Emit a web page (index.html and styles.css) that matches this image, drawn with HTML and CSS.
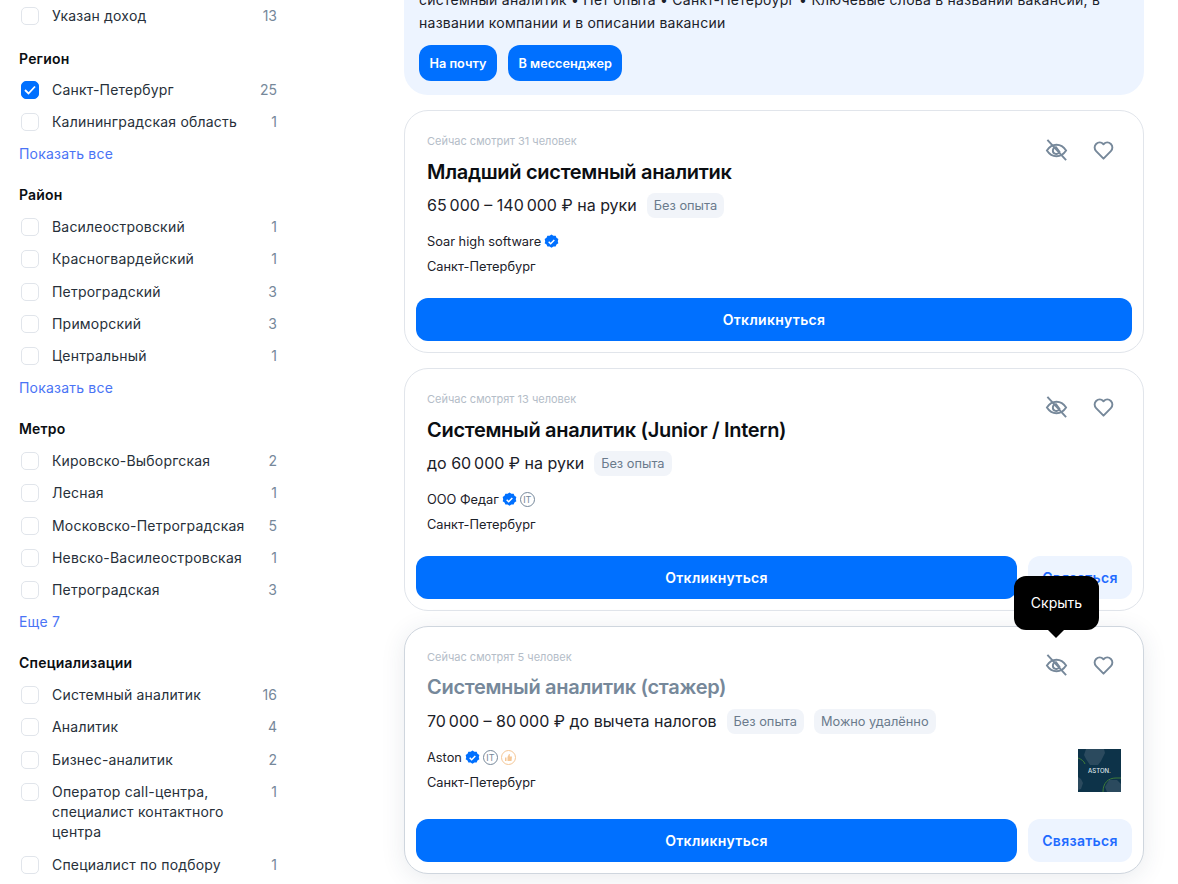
FILE: index.html
```html
<!DOCTYPE html>
<html lang="ru">
<head>
    <meta charset="UTF-8">
    <title>Вакансии</title>
    <link rel="stylesheet" href="styles.css">
</head>
<body>
    <svg class="sprite" width="0" height="0">
        <symbol id="eye-off" viewBox="0 0 24 24">
            <path d="M2 12.500c2.600-4 6-6 10-6s7.400 2 10 6c-2.600 4-6 6-10 6s-7.400-2-10-6z" fill="none" stroke="currentColor" stroke-width="2"/>
            <path d="M11.500 9a3.600 3.600 0 1 0 3.600 5z" fill="none" stroke="currentColor" stroke-width="2"/>
            <path d="M2.500 1.500l19.500 21" fill="none" stroke="currentColor" stroke-width="2"/>
        </symbol>
        <symbol id="heart" viewBox="0 0 24 24">
            <path d="M12 21l-7.700-7.800a5.300 5.300 0 0 1 0-7.500c2.100-2 5.400-2 7.400 0l.3.400.3-.4c2-2 5.300-2 7.400 0a5.300 5.300 0 0 1 0 7.500z" fill="none" stroke="currentColor" stroke-width="2" stroke-linejoin="round"/>
        </symbol>
        <symbol id="verified" viewBox="0 0 16 16">
            <path d="M8 .6l2 1.300 2.400-.1.900 2.200 2 1.300-.6 2.300.6 2.300-2 1.300-.9 2.200-2.400-.1-2 1.300-2-1.300-2.400.1-.9-2.200-2-1.300.6-2.300-.6-2.300 2-1.300.9-2.200 2.400.1z" fill="#0070ff"/>
            <path d="M5 8.200l2.100 2.100L11 6.300" fill="none" stroke="#fff" stroke-width="1.600"/>
        </symbol>
    </svg>

    <div class="page">
        <!-- Filters -->
        <aside class="filters">
            <div class="filter-group filter-first">
                <label class="row"><span class="box"></span><span class="row-name">Указан доход</span><span class="row-count">13</span></label>
            </div>
            <div class="filter-group">
                <div class="filter-title">Регион</div>
                <label class="row"><span class="box box-on"><svg width="12" height="10" viewBox="0 0 12 10"><path d="M1 5l3.500 3.500L11 1.500" fill="none" stroke="#fff" stroke-width="1.800"/></svg></span><span class="row-name">Санкт-Петербург</span><span class="row-count">25</span></label>
                <label class="row"><span class="box"></span><span class="row-name">Калининградская область</span><span class="row-count">1</span></label>
                <a class="more" href="#">Показать все</a>
            </div>
            <div class="filter-group">
                <div class="filter-title">Район</div>
                <label class="row"><span class="box"></span><span class="row-name">Василеостровский</span><span class="row-count">1</span></label>
                <label class="row"><span class="box"></span><span class="row-name">Красногвардейский</span><span class="row-count">1</span></label>
                <label class="row"><span class="box"></span><span class="row-name">Петроградский</span><span class="row-count">3</span></label>
                <label class="row"><span class="box"></span><span class="row-name">Приморский</span><span class="row-count">3</span></label>
                <label class="row"><span class="box"></span><span class="row-name">Центральный</span><span class="row-count">1</span></label>
                <a class="more" href="#">Показать все</a>
            </div>
            <div class="filter-group">
                <div class="filter-title">Метро</div>
                <label class="row"><span class="box"></span><span class="row-name">Кировско-Выборгская</span><span class="row-count">2</span></label>
                <label class="row"><span class="box"></span><span class="row-name">Лесная</span><span class="row-count">1</span></label>
                <label class="row"><span class="box"></span><span class="row-name">Московско-Петроградская</span><span class="row-count">5</span></label>
                <label class="row"><span class="box"></span><span class="row-name">Невско-Василеостровская</span><span class="row-count">1</span></label>
                <label class="row"><span class="box"></span><span class="row-name">Петроградская</span><span class="row-count">3</span></label>
                <a class="more" href="#">Еще 7</a>
            </div>
            <div class="filter-group">
                <div class="filter-title">Специализации</div>
                <label class="row"><span class="box"></span><span class="row-name">Системный аналитик</span><span class="row-count">16</span></label>
                <label class="row"><span class="box"></span><span class="row-name">Аналитик</span><span class="row-count">4</span></label>
                <label class="row"><span class="box"></span><span class="row-name">Бизнес-аналитик</span><span class="row-count">2</span></label>
                <label class="row"><span class="box"></span><span class="row-name">Оператор call-центра, специалист контактного центра</span><span class="row-count">1</span></label>
                <label class="row"><span class="box"></span><span class="row-name">Специалист по подбору</span><span class="row-count">1</span></label>
            </div>
        </aside>

        <!-- Vacancies -->
        <main class="results">
            <section class="subscribe">
                <p>системный аналитик • Нет опыта • Санкт-Петербург • Ключевые слова в названии вакансий, в названии компании и в описании вакансии</p>
                <div class="subscribe-btns">
                    <button class="btn-small">На почту</button>
                    <button class="btn-small">В мессенджер</button>
                </div>
            </section>

            <article class="card card-first">
                <div class="card-top">
                    <div class="card-views">Сейчас смотрит 31 человек</div>
                    <div class="card-actions">
                        <svg class="icon"><use href="#eye-off"/></svg>
                        <svg class="icon"><use href="#heart"/></svg>
                    </div>
                </div>
                <h2 class="card-title">Младший системный аналитик</h2>
                <div class="card-salary">65&#8201;000 – 140&#8201;000 ₽ на руки <span class="tag">Без опыта</span></div>
                <div class="card-info">
                    <div>
                        <div class="card-company">Soar high software <svg class="badge"><use href="#verified"/></svg></div>
                        <div class="card-city">Санкт-Петербург</div>
                    </div>
                </div>
                <div class="card-btns">
                    <button class="btn-main">Откликнуться</button>
                </div>
            </article>

            <article class="card">
                <div class="card-top">
                    <div class="card-views">Сейчас смотрят 13 человек</div>
                    <div class="card-actions">
                        <svg class="icon"><use href="#eye-off"/></svg>
                        <svg class="icon"><use href="#heart"/></svg>
                    </div>
                </div>
                <h2 class="card-title">Системный аналитик (Junior / Intern)</h2>
                <div class="card-salary">до 60&#8201;000 ₽ на руки <span class="tag">Без опыта</span></div>
                <div class="card-info">
                    <div>
                        <div class="card-company">ООО Федаг <svg class="badge"><use href="#verified"/></svg> <span class="it">IT</span></div>
                        <div class="card-city">Санкт-Петербург</div>
                    </div>
                </div>
                <div class="card-btns">
                    <button class="btn-main">Откликнуться</button>
                    <button class="btn-second">Связаться</button>
                </div>
            </article>

            <article class="card card-hover">
                <div class="tooltip">Скрыть</div>
                <div class="card-top">
                    <div class="card-views">Сейчас смотрят 5 человек</div>
                    <div class="card-actions">
                        <svg class="icon"><use href="#eye-off"/></svg>
                        <svg class="icon"><use href="#heart"/></svg>
                    </div>
                </div>
                <h2 class="card-title">Системный аналитик (стажер)</h2>
                <div class="card-salary">70&#8201;000 – 80&#8201;000 ₽ до вычета налогов <span class="tag">Без опыта</span> <span class="tag">Можно удалённо</span></div>
                <div class="card-info card-info-logo">
                    <div>
                        <div class="card-company">Aston <svg class="badge"><use href="#verified"/></svg> <span class="it">IT</span> <span class="rate"><svg width="9" height="9" viewBox="0 0 9 9"><path d="M1 4.500h1.500V8H1zM3.500 8V4l1.500-3h.8v2.500H8L7.500 8z" fill="#f5c796"/></svg></span></div>
                        <div class="card-city">Санкт-Петербург</div>
                    </div>
                    <div class="logo">
                        <svg class="logo-art" width="43" height="43" viewBox="0 0 43 43"><path d="M8 0h18l1 4-4 8-3 4h-8l-4-6-2-4zM0 28l3 2 2 4-2 6-3 1z" fill="#2b4a5e"/><path d="M0 9c3 1 6 3 7 6" fill="none" stroke="#3f7a3a"/><path d="M25 43c0-9 5-14 13-14h5" fill="none" stroke="#3f7a3a"/><path d="M31 31h8l4 4v8H29l-2-5z" fill="#2b4a5e"/></svg>
                        <span>ASTON.</span>
                    </div>
                </div>
                <div class="card-btns">
                    <button class="btn-main">Откликнуться</button>
                    <button class="btn-second">Связаться</button>
                </div>
            </article>
        </main>
    </div>
</body>
</html>
```

FILE: styles.css
```css
body {
    margin: 0;
    font-family: 'Inter', 'Liberation Sans', sans-serif;
    font-size: 14px;
    color: #1b2129;
    background-color: #fff;
}

.sprite {
    display: block;
}

.page {
    display: flex;
    height: 884px;
    overflow: hidden;
}

/* filters */
.filters {
    width: 258px;
    margin-left: 19px;
    padding-top: 6px;
    flex-shrink: 0;
    letter-spacing: 0.2px;
}

.filter-group {
    margin-bottom: 21.4px;
}

.filter-first {
    margin-bottom: 23px;
}

.filter-title {
    font-weight: 600;
    line-height: 20px;
    margin-bottom: 11.5px;
    color: #0b0e12;
}

.filter-first + .filter-group .filter-title {
    margin-bottom: 11px;
}

.row {
    display: flex;
    align-items: flex-start;
    line-height: 20px;
    margin-bottom: 12.4px;
}

.box {
    width: 16px;
    height: 16px;
    margin: 1px 13px 0 2px;
    border: 1px solid #e1e5eb;
    border-radius: 5px;
    flex-shrink: 0;
    display: flex;
    align-items: center;
    justify-content: center;
}

.box-on {
    background: #0070ff;
    border-color: #0070ff;
}

.row-name {
    flex: 1;
    padding-right: 24px;
    color: #27303a;
}

.row-count {
    color: #76889a;
    letter-spacing: 0;
}

.more {
    display: block;
    margin-top: -0.8px;
    line-height: 20px;
    color: #4a74f5;
    text-decoration: none;
}

/* vacancies */
.results {
    width: 740px;
    margin-left: 127px;
    margin-top: -60px;
}

.subscribe {
    background: #edf4ff;
    border-radius: 24px;
    padding: 48px 15px 14px;
    margin-bottom: 15px;
}

.subscribe p {
    margin: 0 0 11px;
    line-height: 23px;
    letter-spacing: 0.25px;
}

.subscribe-btns {
    display: flex;
    gap: 11px;
}

.btn-small {
    height: 36px;
    padding: 0 10.5px;
    border: none;
    border-radius: 12px;
    background: #0070ff;
    color: #fff;
    font: 600 12.7px 'Inter', sans-serif;
}

.card {
    position: relative;
    border: 1px solid #e1e5eb;
    border-radius: 24px;
    padding: 0 11px 11px;
    margin-bottom: 15px;
    background: #fff;
}

.card-hover {
    border-color: #cfd6de;
    box-shadow: 0 4px 24px rgba(40, 60, 90, 0.1);
}

.card-hover .card-title {
    margin: -1px 0 1px;
    color: #76889a;
}

.card-top {
    display: flex;
    justify-content: space-between;
    padding: 19px 17px 0 11px;
    height: 47px;
    box-sizing: border-box;
}

.card-views {
    font-size: 11px;
    line-height: 22px;
    color: #b4bdc8;
}

.card-actions {
    display: flex;
    gap: 24px;
    margin-top: 7px;
    color: #76889a;
}

.card-first .card-actions {
    margin-top: 8px;
}

.icon {
    width: 23px;
    height: 24px;
}

.card-title {
    margin: 0;
    padding: 0 11px;
    font-size: 20px;
    font-weight: 600;
    letter-spacing: -0.3px;
    line-height: 28px;
    color: #0b0e12;
}

.card-salary {
    display: flex;
    align-items: center;
    gap: 10px;
    padding: 6px 11px 0;
    font-size: 16px;
    line-height: 26px;
}

.tag {
    height: 25px;
    padding: 0 7px;
    border-radius: 8px;
    background: #f1f4f9;
    color: #6a7a8c;
    font-size: 12.8px;
    line-height: 25px;
}

.card-info {
    display: flex;
    justify-content: space-between;
    align-items: flex-start;
    padding: 10px 11px 0;
    height: 80px;
    box-sizing: border-box;
}

.card-info-logo {
    height: 85px;
}

.card-company {
    display: flex;
    align-items: center;
    gap: 3px;
    height: 26px;
    font-size: 12.8px;
}

.card-city {
    font-size: 12.8px;
    line-height: 26px;
}

.badge {
    width: 15px;
    height: 15px;
}

.it {
    width: 13px;
    height: 13px;
    border: 1px solid #76889a;
    border-radius: 50%;
    color: #76889a;
    font-size: 9px;
    line-height: 13px;
    text-align: center;
}

.rate {
    width: 13px;
    height: 13px;
    border: 1px solid #f5c796;
    border-radius: 50%;
    display: flex;
    align-items: center;
    justify-content: center;
}

.logo {
    position: relative;
    width: 43px;
    height: 43px;
    margin-top: 5px;
    background: #0d3349;
    color: #dfe6ea;
    font-size: 6px;
    font-weight: 500;
    display: flex;
    align-items: center;
    justify-content: center;
}

.logo-art {
    position: absolute;
    left: 0;
    top: 0;
}

.logo span {
    position: relative;
}

.card-btns {
    display: flex;
    gap: 11px;
}

.btn-main {
    flex: 1;
    height: 43px;
    border: none;
    border-radius: 12px;
    background: #0070ff;
    color: #fff;
    font: 600 14px 'Inter', sans-serif;
    letter-spacing: 0.3px;
}

.btn-second {
    width: 104px;
    height: 43px;
    border: none;
    border-radius: 12px;
    background: #edf4ff;
    color: #1f6bff;
    font: 600 14px 'Inter', sans-serif;
    letter-spacing: 0.3px;
}

.tooltip {
    position: absolute;
    top: -51px;
    right: 44px;
    width: 85px;
    height: 54px;
    border-radius: 12px;
    background: #000;
    color: #fff;
    line-height: 54px;
    text-align: center;
    z-index: 2;
}

.tooltip::after {
    content: '';
    position: absolute;
    left: 34px;
    bottom: -8px;
    border-left: 8px solid transparent;
    border-right: 8px solid transparent;
    border-top: 8px solid #000;
}
```
